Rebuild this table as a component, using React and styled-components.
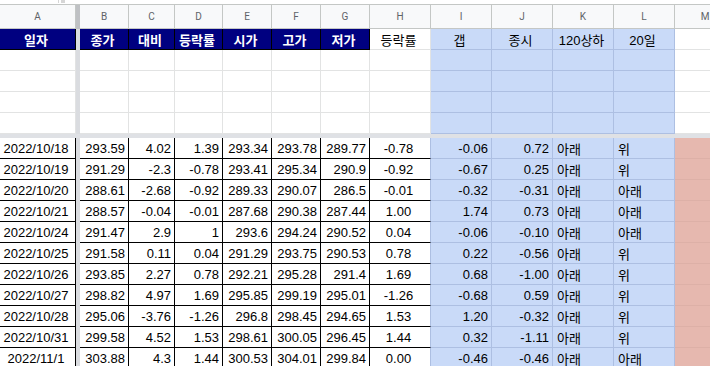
import React from "react";
import styled, { createGlobalStyle } from "styled-components";

const COLS = "76px 4px 49px 46px 48px 49px 49px 49px 61px 61px 61px 61px 61px 61px";
const BLACK = "#000000";
const GRID = "#e2e3e3";
const BLUE = "#c9daf8";
const BLUE_GRID = "#adbfe2";
const NAVY = "#000080";
const PINK = "#e6b8af";

const GlobalStyle = createGlobalStyle`
  html, body {
    margin: 0;
    background: #ffffff;
    overflow: hidden;
  }
  body {
    font-family: "Liberation Sans", "Noto Sans CJK KR", Arial, sans-serif;
  }
`;

const Page = styled.div`
  width: 736px;
  height: 366px;
  overflow: hidden;
`;

const TopStrip = styled.div`
  height: 4px;
  display: flex;
  padding-left: 58px;
  gap: 2px;
`;

const Tick = styled.span`
  width: ${(p) => p.$w}px;
  height: 3px;
  background: #d6d6d6;
`;

const Row = styled.div`
  display: grid;
  grid-template-columns: ${COLS};
  height: ${(p) => p.$h || 21}px;
  border-top: ${(p) => (p.$top ? "1px solid #c4c7c5" : "none")};
  box-sizing: border-box;
`;

const HeadCell = styled.div`
  display: flex;
  align-items: center;
  justify-content: center;
  background: #f8f9fa;
  border-right: 1px solid #c4c7c5;
  border-bottom: 1px solid #c4c7c5;
  font-family: Roboto, "Liberation Sans", sans-serif;
  font-size: 10px;
  color: #5f6368;
  box-sizing: border-box;
`;

const Freeze = styled.div`
  background: ${(p) => (p.$head ? "#bfc1c4" : "#dadce0")};
`;

const FreezeRow = styled.div`
  height: 4px;
  background: #dfe1e5;
`;

const Cell = styled.div`
  display: flex;
  align-items: center;
  justify-content: ${(p) =>
    p.$align === "right" ? "flex-end" : p.$align === "left" ? "flex-start" : "center"};
  padding: 0 ${(p) => (p.$align === "left" ? "0 0 4px" : "3px 0 0")};
  background: ${(p) => p.$bg || "#ffffff"};
  border-right: 1px solid ${(p) => p.$rb || GRID};
  border-bottom: 1px solid ${(p) => p.$bb || GRID};
  color: ${(p) => p.$color || "#000000"};
  font-weight: ${(p) => (p.$bold ? 700 : 400)};
  font-size: 13px;
  white-space: nowrap;
  overflow: hidden;
  box-sizing: border-box;
`;

const letters = ["A", "B", "C", "D", "E", "F", "G", "H", "I", "J", "K", "L", "M"];
const titles = ["일자", "종가", "대비", "등락률", "시가", "고가", "저가"];
const sideTitles = ["갭", "종시", "120상하", "20일"];

const rows = [
  ["2022/10/18", "293.59", "4.02", "1.39", "293.34", "293.78", "289.77", "-0.78", "-0.06", "0.72", "아래", "위"],
  ["2022/10/19", "291.29", "-2.3", "-0.78", "293.41", "295.34", "290.9", "-0.92", "-0.67", "0.25", "아래", "위"],
  ["2022/10/20", "288.61", "-2.68", "-0.92", "289.33", "290.07", "286.5", "-0.01", "-0.32", "-0.31", "아래", "아래"],
  ["2022/10/21", "288.57", "-0.04", "-0.01", "287.68", "290.38", "287.44", "1.00", "1.74", "0.73", "아래", "아래"],
  ["2022/10/24", "291.47", "2.9", "1", "293.6", "294.24", "290.52", "0.04", "-0.06", "-0.10", "아래", "아래"],
  ["2022/10/25", "291.58", "0.11", "0.04", "291.29", "293.75", "290.53", "0.78", "0.22", "-0.56", "아래", "위"],
  ["2022/10/26", "293.85", "2.27", "0.78", "292.21", "295.28", "291.4", "1.69", "0.68", "-1.00", "아래", "위"],
  ["2022/10/27", "298.82", "4.97", "1.69", "295.85", "299.19", "295.01", "-1.26", "-0.68", "0.59", "아래", "위"],
  ["2022/10/28", "295.06", "-3.76", "-1.26", "296.8", "298.45", "294.65", "1.53", "1.20", "-0.32", "아래", "위"],
  ["2022/10/31", "299.58", "4.52", "1.53", "298.61", "300.05", "296.45", "1.44", "0.32", "-1.11", "아래", "위"],
  ["2022/11/1", "303.88", "4.3", "1.44", "300.53", "304.01", "299.84", "0.00", "-0.46", "-0.46", "아래", "아래"],
];

const BlueCells = ({ values = ["", "", "", ""], align }) =>
  values.map((v, i) => (
    <Cell
      key={i}
      $bg={BLUE}
      $rb={BLUE_GRID}
      $bb={BLUE_GRID}
      $align={align ? align[i] : "center"}
    >
      {v}
    </Cell>
  ));

const BlankRow = () => (
  <Row>
    <Cell />
    <Freeze />
    {Array.from({ length: 7 }).map((_, i) => (
      <Cell key={i} />
    ))}
    <BlueCells />
    <Cell />
  </Row>
);

const DataRow = ({ r }) => (
  <Row>
    <Cell $rb={BLACK} $bb={BLACK}>
      {r[0]}
    </Cell>
    <Freeze />
    {r.slice(1, 7).map((v, i) => (
      <Cell key={i} $align="right" $rb={BLACK} $bb={BLACK}>
        {v}
      </Cell>
    ))}
    <Cell $rb={BLUE_GRID} $bb={BLACK}>
      {r[7]}
    </Cell>
    <BlueCells values={r.slice(8, 12)} align={["right", "right", "left", "left"]} />
    <Cell $bg={PINK} $rb={PINK} $bb="#ddb0a7" />
  </Row>
);

export default function App() {
  return (
    <Page>
      <GlobalStyle />
      <TopStrip>
        <Tick $w={1} />
        <Tick $w={4} />
      </TopStrip>
      <Row $h={25} $top>
        <HeadCell>A</HeadCell>
        <Freeze $head />
        {letters.slice(1).map((l) => (
          <HeadCell key={l}>{l}</HeadCell>
        ))}
      </Row>
      <Row>
        <Cell $bg={NAVY} $color="#ffffff" $bold $rb={BLACK} $bb={BLACK}>
          {titles[0]}
        </Cell>
        <Freeze />
        {titles.slice(1).map((t) => (
          <Cell key={t} $bg={NAVY} $color="#ffffff" $bold $rb={BLACK} $bb={BLACK}>
            {t}
          </Cell>
        ))}
        <Cell>등락률</Cell>
        <BlueCells values={sideTitles} />
        <Cell />
      </Row>
      <BlankRow />
      <BlankRow />
      <BlankRow />
      <BlankRow />
      <FreezeRow />
      {rows.map((r) => (
        <DataRow key={r[0]} r={r} />
      ))}
    </Page>
  );
}
